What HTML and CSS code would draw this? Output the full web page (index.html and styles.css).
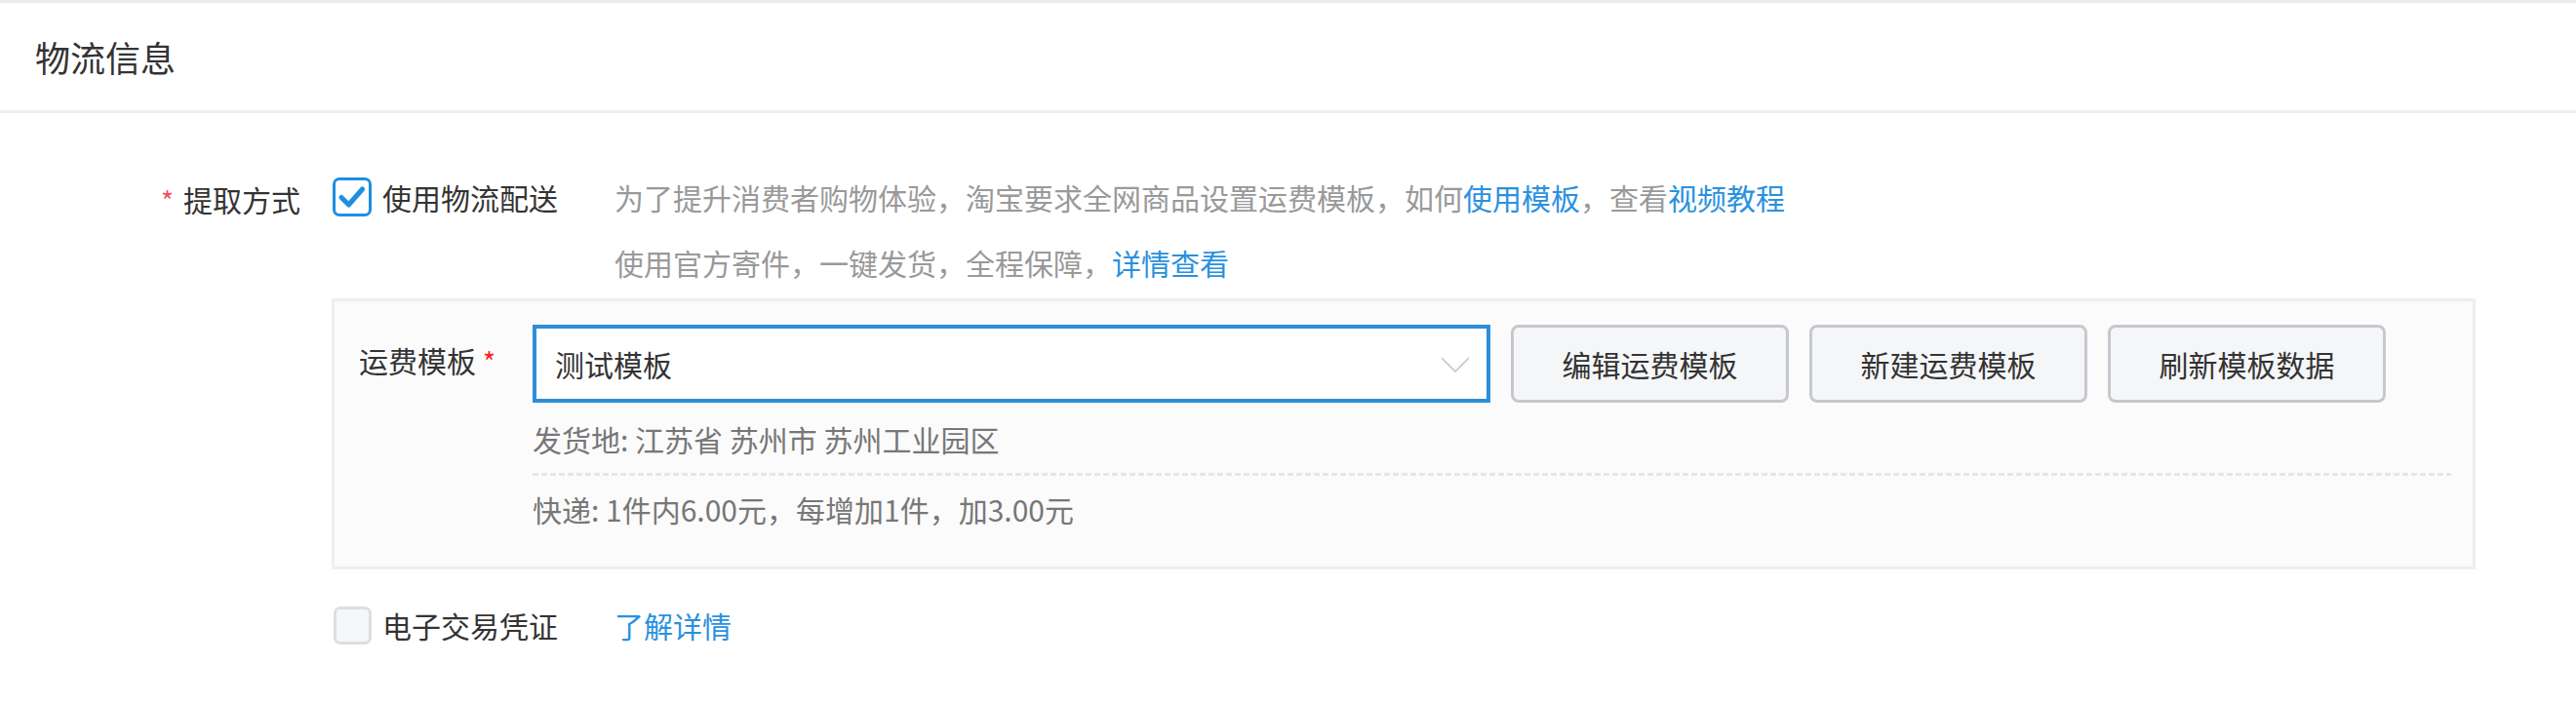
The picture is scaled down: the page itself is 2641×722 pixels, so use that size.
FILE: index.html
```html
<!DOCTYPE html>
<html lang="zh-CN">
<head>
<meta charset="utf-8">
<title>物流信息</title>
<link rel="stylesheet" href="styles.css">
</head>
<body>
<div class="page">
  <div class="panel-head">
    <h2 class="panel-title">物流信息</h2>
  </div>
  <div class="panel-body">
    <div class="form-row">
      <div class="form-label"><span class="req">*</span>提取方式</div>
      <div class="form-content">
        <div class="ship-option">
          <label class="check">
            <span class="box box-on">
              <svg viewBox="0 0 34 34" width="34" height="34"><path d="M6 17.5 L13.5 25 L27.5 9" fill="none" stroke="#1f8ee0" stroke-width="5" stroke-linecap="round" stroke-linejoin="round"/></svg>
            </span>
            <span class="check-text">使用物流配送</span>
          </label>
          <div class="hint">
            <p class="hint-line">为了提升消费者购物体验，淘宝要求全网商品设置运费模板，如何<a class="link" href="#">使用模板</a>，查看<a class="link" href="#">视频教程</a></p>
            <p class="hint-line hint-second">使用官方寄件，一键发货，全程保障，<a class="link" href="#">详情查看</a></p>
          </div>
        </div>

        <div class="tpl-box">
          <div class="tpl-row">
            <div class="tpl-label">运费模板<span class="req-red">*</span></div>
            <div class="tpl-main">
              <div class="tpl-controls">
                <div class="select">
                  <span class="select-value">测试模板</span>
                  <svg class="chevron" viewBox="0 0 30 16" width="30" height="16"><path d="M1 1 L15 15 L29 1" fill="none" stroke="#c4c4c4" stroke-width="1.6"/></svg>
                </div>
                <button class="btn" type="button">编辑运费模板</button>
                <button class="btn" type="button">新建运费模板</button>
                <button class="btn" type="button">刷新模板数据</button>
              </div>
              <div class="tpl-info">
                <p class="info-line">发货地: 江苏省 苏州市 苏州工业园区</p>
                <div class="dash"></div>
                <p class="info-line info-second">快递: 1件内6.00元，每增加1件，加3.00元</p>
              </div>
            </div>
          </div>
        </div>

        <div class="evidence">
          <label class="check">
            <span class="box box-off"></span>
            <span class="check-text">电子交易凭证</span>
          </label>
          <a class="link" href="#">了解详情</a>
        </div>
      </div>
    </div>
  </div>
</div>
</body>
</html>
```

FILE: styles.css
```css
* {
  box-sizing: border-box;
}

html, body {
  margin: 0;
  padding: 0;
  background: #ffffff;
}

body {
  font-family: "Noto Sans CJK SC", "Noto Sans", sans-serif;
  color: #333333;
  font-size: 30px;
}

.page {
  border-top: 3px solid #ebebeb;
}

.panel-head {
  height: 113px;
  border-bottom: 3px solid #eeeeee;
  display: flex;
  align-items: center;
  padding-left: 36px;
}

.panel-title {
  margin: 0;
  font-size: 36px;
  font-weight: normal;
  color: #333333;
  line-height: 44px;
}

.panel-body {
  padding-top: 64px;
}

.form-row {
  display: grid;
  grid-template-columns: 308px 2198px;
  column-gap: 32px;
}

.form-label {
  text-align: right;
  line-height: 44px;
  color: #333333;
  padding-top: 2px;
}

.req {
  color: #f0505e;
  margin-right: 10px;
  font-size: 28px;
}

.ship-option {
  display: flex;
  align-items: flex-start;
}

.check {
  display: flex;
  align-items: center;
  width: 290px;
  height: 44px;
  cursor: pointer;
}

.box {
  width: 40px;
  height: 40px;
  border-radius: 7px;
  display: flex;
  align-items: center;
  justify-content: center;
  flex-shrink: 0;
  margin-left: 1px;
}

.box-on {
  border: 3px solid #1f8ee0;
  background: #ffffff;
}

.box-off {
  width: 39px;
  height: 39px;
  border: 3px solid #dcdee3;
  background: #f5f6f8;
  margin-left: 2px;
}

.check-text {
  margin-left: 11px;
  line-height: 44px;
  color: #333333;
}

.hint {
  color: #999999;
}

.hint-line {
  margin: 0;
  line-height: 44px;
}

.hint-second {
  margin-top: 23px;
}

.link {
  color: #2a91de;
  text-decoration: none;
}

.tpl-box {
  margin-top: 15px;
  border: 3px solid #eeeeee;
  background: #fbfbfb;
  padding: 24px 22px 37px 25px;
}

.tpl-row {
  display: grid;
  grid-template-columns: 178px 1fr;
}

.tpl-label {
  line-height: 44px;
  margin-top: 14px;
  color: #333333;
}

.req-red {
  color: #ff1a1a;
  margin-left: 7px;
  font-size: 28px;
}

.tpl-controls {
  display: flex;
  align-items: center;
  gap: 21px;
}

.select {
  width: 982px;
  height: 80px;
  border: 4px solid #2b8fd9;
  background: #ffffff;
  display: flex;
  align-items: center;
  justify-content: space-between;
  padding: 0 17px 0 19px;
}

.select-value {
  color: #333333;
  line-height: 44px;
}

.chevron {
  display: block;
  margin-top: 2px;
}

.btn {
  width: 285px;
  height: 80px;
  border: 3px solid #c6c8ce;
  border-radius: 8px;
  background: #f5f6f8;
  color: #333333;
  font-family: inherit;
  font-size: 30px;
  line-height: 44px;
  padding: 0;
}

.tpl-info {
  margin-top: 15px;
  color: #777777;
}

.info-line {
  margin: 0;
  line-height: 44px;
}

.dash {
  margin-top: 13px;
  height: 3px;
  background: repeating-linear-gradient(90deg, #e3e5ea 0, #e3e5ea 6px, transparent 6px, transparent 9px);
}

.info-second {
  margin-top: 12px;
}

.evidence {
  margin-top: 35px;
  display: flex;
  align-items: center;
}
```
